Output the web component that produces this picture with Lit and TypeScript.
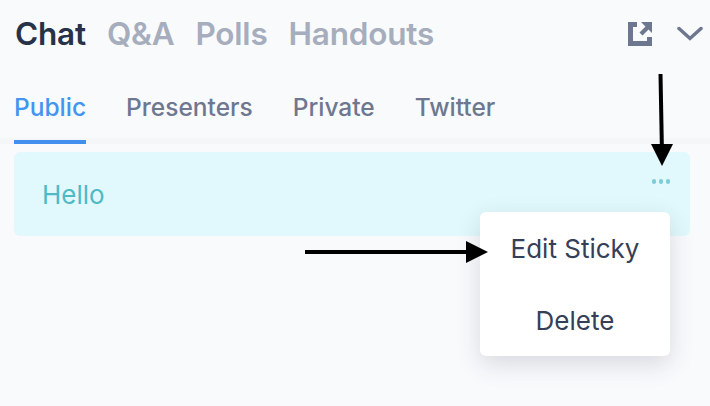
import { LitElement, html, css, svg } from "lit";
import { customElement } from "lit/decorators.js";

const MAIN_TABS = ["Chat", "Q&A", "Polls", "Handouts"];
const SUB_TABS = ["Public", "Presenters", "Private", "Twitter"];

@customElement("app-root")
export class AppRoot extends LitElement {
  static styles = css`
    :host {
      display: block;
      position: relative;
      width: 710px;
      height: 406px;
      overflow: hidden;
      background: #f9fafc;
      font-family: Inter, "Noto Sans", sans-serif;
    }

    .top {
      display: flex;
      align-items: center;
      justify-content: space-between;
      height: 66px;
      padding: 0 7px 0 15px;
    }

    .main-tabs {
      display: flex;
      gap: 21px;
      font-size: 31.5px;
      font-weight: 600;
      letter-spacing: -0.2px;
      color: #a6adbd;
    }

    .main-tabs .active {
      color: #273249;
    }

    .actions {
      display: flex;
      align-items: center;
      gap: 25px;
      padding-top: 2px;
    }

    .actions svg {
      display: block;
    }

    .sub-tabs {
      display: flex;
      gap: 40px;
      height: 72px;
      padding-left: 14px;
      border-bottom: 6px solid #f5f6f8;
      font-size: 24.5px;
      font-weight: 500;
      color: #6d7890;
    }

    .sub-tab {
      display: flex;
      align-items: center;
      height: 78px;
      box-sizing: border-box;
      padding-top: 8px;
      border-bottom: 4px solid transparent;
    }

    .sub-tab.active {
      color: #4295f0;
      border-bottom-color: #428ff0;
    }

    .sticky {
      position: relative;
      display: flex;
      align-items: center;
      box-sizing: border-box;
      height: 84px;
      margin: 8px 20px 0 14px;
      padding: 0 28px;
      border-radius: 6px;
      background: #e1f9fc;
      color: #4fb9c6;
      font-size: 26px;
    }

    .dots {
      position: absolute;
      top: 27px;
      right: 20px;
      display: flex;
      gap: 2.500px;
    }

    .dots span {
      width: 4.500px;
      height: 4.500px;
      border-radius: 50%;
      background: #7ccdd6;
    }

    .menu {
      position: absolute;
      left: 480px;
      top: 212px;
      display: flex;
      flex-direction: column;
      width: 190px;
      height: 144px;
      border-radius: 6px;
      background: #fff;
      box-shadow: 0 8px 24px rgba(39, 50, 73, 0.16);
      color: #354058;
      font-size: 26px;
    }

    .menu div {
      flex: 1;
      display: flex;
      align-items: center;
      justify-content: center;
    }

    .arrows {
      position: absolute;
      inset: 0;
    }
  `;

  render() {
    return html`
      <div class="top">
        <div class="main-tabs">
          ${MAIN_TABS.map(
            (t, i) => html`<span class=${i === 0 ? "active" : ""}>${t}</span>`
          )}
        </div>
        <div class="actions">
          <svg width="24" height="24" viewBox="0 0 24 24">
            <path
              fill="#6d7890"
              d="M0 0h9v5H5v14h14v-4h5v9H0zM13 0h11v11l-3.500-3.500-6 6-3-3 6-6z"
            />
          </svg>
          <svg width="26" height="16" viewBox="0 0 26 16">
            <path
              d="M2 2.500l11 10 11-10"
              fill="none"
              stroke="#6d7890"
              stroke-width="3.500"
              stroke-linecap="round"
            />
          </svg>
        </div>
      </div>
      <div class="sub-tabs">
        ${SUB_TABS.map(
          (t, i) => html`<div class="sub-tab ${i === 0 ? "active" : ""}">${t}</div>`
        )}
      </div>
      <div class="sticky">
        Hello
        <div class="dots"><span></span><span></span><span></span></div>
      </div>
      <div class="menu">
        <div>Edit Sticky</div>
        <div>Delete</div>
      </div>
      <svg class="arrows" width="710" height="406" viewBox="0 0 710 406">
        ${svg`
          <path d="M660.500 74l1.500 80" stroke="#000" stroke-width="4" fill="none" />
          <path d="M651 144h22l-11 22z" />
          <path d="M305 252h164" stroke="#000" stroke-width="4" fill="none" />
          <path d="M466 241l22 11-22 11z" />
        `}
      </svg>
    `;
  }
}

declare global {
  interface HTMLElementTagNameMap {
    "app-root": AppRoot;
  }
}
